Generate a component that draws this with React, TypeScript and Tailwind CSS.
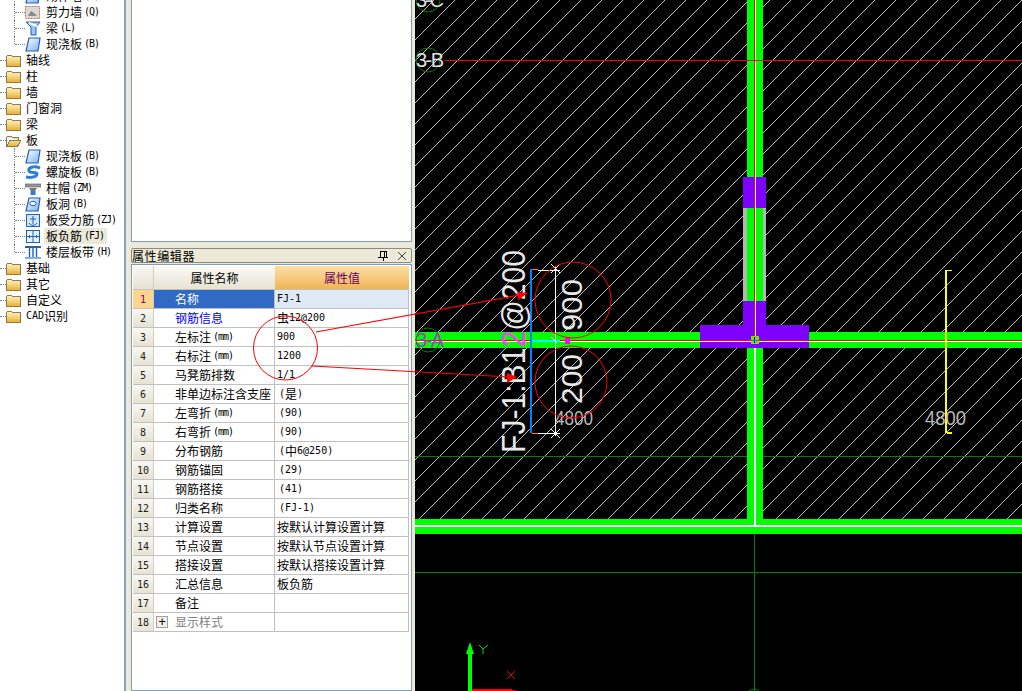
import React from "react";

const cjk = "font-['Noto_Sans_CJK_SC',sans-serif] text-[12px] leading-[16px] shrink-0";
const mono = "font-['DejaVu_Sans_Mono',monospace] text-[10px] leading-[16px] shrink-0";
const monoSmall = "font-['DejaVu_Sans_Mono',monospace] text-[10px] leading-[16px] tracking-[-1px] ml-[2px] shrink-0";

function Mixed({ text, small }: { text: string; small?: boolean }) {
  const parts = text.match(/[\u3000-\u9fff]+|[^\u3000-\u9fff]+/g) ?? [];
  return (
    <span className="whitespace-pre flex items-center shrink-0">
      {parts.map((p, i) =>
        /[\u3000-\u9fff]/.test(p) ? (
          <span key={i} className={cjk}>{p}</span>
        ) : (
          <span key={i} className={small ? monoSmall : mono}>{p}</span>
        )
      )}
    </span>
  );
}

function Folder({ open }: { open?: boolean }) {
  return (
    <svg width="16" height="13" viewBox="0 0 16 13" shapeRendering="crispEdges" className="shrink-0">
      <defs>
        <linearGradient id="fold" x1="0" y1="0" x2="0" y2="1">
          <stop offset="0" stopColor="#fff6c8" />
          <stop offset="1" stopColor="#e8b030" />
        </linearGradient>
      </defs>
      {open ? (
        <>
          <path d="M0.5 2.5h5l1 1h6v3" fill="#f3e2a8" stroke="#8a7a50" />
          <path d="M0.5 12.5V3M0.5 12.5h11l3.5-6.5H4L0.5 12.5z" fill="url(#fold)" stroke="#8a7a50" />
        </>
      ) : (
        <path d="M0.5 2.5l1-1h4l1 1h7.5v10H0.5z" fill="url(#fold)" stroke="#8a7a50" />
      )}
    </svg>
  );
}

function ChildIcon({ kind }: { kind: string }) {
  const blue = "#1c5fc0";
  return (
    <svg width="16" height="15" viewBox="0 0 16 15" className="shrink-0">
      <defs>
        <linearGradient id="plate" x1="0" y1="0" x2="1" y2="1">
          <stop offset="0" stopColor="#ffffff" />
          <stop offset="1" stopColor="#7fb0ea" />
        </linearGradient>
      </defs>
      {kind === "wall" && (
        <>
          <rect x="0.5" y="1.5" width="14" height="12" fill="#d8d8d8" stroke="#e07030" strokeDasharray="2 1" />
          <path d="M3 11l3-5 3 2 3 3z" fill="#888" />
        </>
      )}
      {kind === "beam" && (
        <>
          <path d="M1 1h14l-4 5v8H6V6z" fill="#9cc4ee" stroke={blue} />
          <path d="M4 2l8 3" stroke="#fff" strokeWidth="2" />
        </>
      )}
      {kind === "slab" && <path d="M4 1h11l-2 13H1z" fill="url(#plate)" stroke={blue} strokeWidth="1.2" />}
      {kind === "spiral" && (
        <path d="M15 3C8 0 3 3 4 6s8 0 8 3-6 4-11 3" fill="none" stroke="#2f7fd8" strokeWidth="3" />
      )}
      {kind === "cap" && (
        <>
          <rect x="0" y="3" width="16" height="3" fill="#9a9a9a" stroke="#555" strokeWidth="0.6" />
          <path d="M4 7h8l-2 3H6z" fill="#777" />
          <rect x="5.5" y="10" width="5" height="4" fill="#2f7fd8" />
        </>
      )}
      {kind === "hole" && (
        <>
          <path d="M4 1h11l-2 13H1z" fill="url(#plate)" stroke={blue} strokeWidth="1.2" />
          <ellipse cx="8" cy="6.5" rx="3.2" ry="2.2" fill="#fff" stroke={blue} />
        </>
      )}
      {kind === "rebar" && (
        <>
          <rect x="1.5" y="1.5" width="13" height="12" fill="#d6e6fa" stroke={blue} />
          <path d="M8 3v8M4 10c1 3 7 3 8 0M5 6h6" fill="none" stroke={blue} />
        </>
      )}
      {kind === "neg" && (
        <>
          <rect x="1.5" y="1.5" width="13" height="12" fill="#e8f1fc" stroke={blue} />
          <path d="M2 7.5h12M8 2v11M4.5 6v3M11.5 6v3" fill="none" stroke={blue} />
        </>
      )}
      {kind === "band" && (
        <>
          <rect x="0" y="1" width="16" height="2" fill="#335f9f" />
          <rect x="0" y="12" width="16" height="2" fill="#7fb0ea" />
          <path d="M4.5 3v9M8 3v9M11.5 3v9" stroke={blue} strokeWidth="1.4" />
        </>
      )}
    </svg>
  );
}

type T = { label: string; icon?: string; folder?: boolean; open?: boolean; sel?: boolean; last?: boolean };
const tree: T[] = [
  { label: "砌体墙(Q)", icon: "slab" },
  { label: "剪力墙(Q)", icon: "wall" },
  { label: "梁(L)", icon: "beam" },
  { label: "现浇板(B)", icon: "slab", last: true },
  { label: "轴线", folder: true },
  { label: "柱", folder: true },
  { label: "墙", folder: true },
  { label: "门窗洞", folder: true },
  { label: "梁", folder: true },
  { label: "板", folder: true, open: true },
  { label: "现浇板(B)", icon: "slab" },
  { label: "螺旋板(B)", icon: "spiral" },
  { label: "柱帽(ZM)", icon: "cap" },
  { label: "板洞(B)", icon: "hole" },
  { label: "板受力筋(ZJ)", icon: "rebar" },
  { label: "板负筋(FJ)", icon: "neg", sel: true },
  { label: "楼层板带(H)", icon: "band", last: true },
  { label: "基础", folder: true },
  { label: "其它", folder: true },
  { label: "自定义", folder: true },
  { label: "CAD识别", folder: true },
];

function Tree() {
  return (
    <div className="w-[124px] shrink-0 bg-white overflow-hidden text-black">
      <div className="-mt-[12px]">
        {tree.map((t, i) =>
          t.folder ? (
            <div key={i} className="h-[16px] flex items-center relative">
              <div className="w-[6px] shrink-0 border-t border-dotted border-[#808080]" />
              <Folder open={t.open} />
              <span className="ml-[4px] flex items-center">
                <Mixed text={t.label} />
              </span>
            </div>
          ) : (
            <div key={i} className="h-[16px] flex items-center pl-[15px] relative">
              <div className={`absolute left-[14px] top-0 border-l border-dotted border-[#808080] ${t.last ? "h-[8px]" : "h-[16px]"}`} />
              <div className="w-[10px] shrink-0 border-t border-dotted border-[#808080]" />
              <ChildIcon kind={t.icon!} />
              <span className={`ml-[3px] pl-[2px] pr-[3px] h-[16px] flex items-center shrink-0 ${t.sel ? "bg-[#ebe9d8]" : ""}`}>
                <Mixed text={t.label} small />
              </span>
            </div>
          )
        )}
      </div>
    </div>
  );
}

const rows: [string, string][] = [
  ["名称", "FJ-1"],
  ["钢筋信息", "虫12@200"],
  ["左标注(mm)", "900"],
  ["右标注(mm)", "1200"],
  ["马凳筋排数", "1/1"],
  ["非单边标注含支座", "(是)"],
  ["左弯折(mm)", "(90)"],
  ["右弯折(mm)", "(90)"],
  ["分布钢筋", "(中6@250)"],
  ["钢筋锚固", "(29)"],
  ["钢筋搭接", "(41)"],
  ["归类名称", "(FJ-1)"],
  ["计算设置", "按默认计算设置计算"],
  ["节点设置", "按默认节点设置计算"],
  ["搭接设置", "按默认搭接设置计算"],
  ["汇总信息", "板负筋"],
  ["备注", ""],
  ["显示样式", ""],
];

function PropTable() {
  return (
    <div className="ml-[1px] mt-[1px] w-[276px] text-black">
      <div className="flex h-[24px] border-b border-[#c4c2b4]">
        <div className="w-[21px] bg-gradient-to-b from-[#f8f7f1] to-[#e6e3d3] border-r border-[#d0cec0]" />
        <div className="w-[121px] flex items-center justify-center bg-gradient-to-b from-[#fbfaf5] to-[#e6e3d3]">
          <span className={cjk}>属性名称</span>
        </div>
        <div className="flex-1 flex items-center justify-center bg-gradient-to-b from-[#fce0a4] to-[#f0b453] text-[#660066]">
          <span className={cjk}>属性值</span>
        </div>
      </div>
      {rows.map(([name, val], i) => (
        <div key={i} className="flex h-[19px] border-b border-r border-[#c0c0c0]">
          <div
            className={`w-[21px] shrink-0 flex items-center justify-center font-['DejaVu_Sans_Mono',monospace] text-[10px] border-r border-[#d0cec0] ${
              i === 0 ? "bg-[#fdd58c] text-[#800080]" : "bg-gradient-to-b from-[#f8f7f1] to-[#e6e3d3] text-[#222]"
            }`}
          >
            {i + 1}
          </div>
          <div
            className={`w-[121px] shrink-0 flex items-center border-r border-[#c0c0c0] ${i === 0 ? "bg-[#316ac5] text-white" : ""} ${
              i === 1 ? "text-[#0000ff]" : ""
            } ${i === 17 ? "text-[#808080]" : ""}`}
          >
            {i === 17 ? (
              <span className="ml-[2px] mr-[7px] w-[12px] h-[12px] shrink-0 border border-[#a0a0a0] bg-[#f2f0e6] flex items-center justify-center text-black font-['DejaVu_Sans_Mono',monospace] text-[12px] leading-none">
                +
              </span>
            ) : (
              <span className="w-[21px] shrink-0" />
            )}
            <Mixed text={name} small />
          </div>
          <div className={`flex-1 flex items-center ${val.startsWith("(") ? "pl-[4px]" : "pl-[2px]"} ${i === 0 ? "bg-[#dfe8f5]" : ""}`}>
            <Mixed text={val} />
          </div>
        </div>
      ))}
    </div>
  );
}

function Middle() {
  return (
    <div className="w-[281px] shrink-0 flex flex-col">
      <div className="h-[242px] bg-white border-l border-r border-b border-[#7f9db9]" />
      <div className="mt-[6px] h-[15px] bg-[#ece9d8] border border-[#8a8a80] rounded-[2px] flex items-center text-black">
        <span className={`${cjk} tracking-[0.6px] flex-1`}>属性编辑器</span>
        <svg width="12" height="12" viewBox="0 0 12 12" className="mr-[8px]" shapeRendering="crispEdges">
          <path d="M3 1h6v6H3zM6 7v4M1 7.5h10M7 1v6" fill="none" stroke="#000" />
        </svg>
        <svg width="10" height="10" viewBox="0 0 10 10" className="mr-[4px]">
          <path d="M1 1l8 8M9 1l-8 8" stroke="#444" />
        </svg>
      </div>
      <div className="mt-[1px] flex-1 bg-white border border-[#7f9db9]">
        <PropTable />
      </div>
    </div>
  );
}

const cad = "'Liberation Sans', sans-serif";

function Canvas() {
  return (
    <svg width="607" height="691" viewBox="415 0 607 691" className="shrink-0 block bg-black">
      <defs>
        <pattern id="hatch" patternUnits="userSpaceOnUse" width="21" height="21" x="14" y="0">
          <path d="M-2 23L23 -2" stroke="#c0c0c0" strokeWidth="1" fill="none" shapeRendering="crispEdges" />
        </pattern>
      </defs>
      <rect x="415" y="0" width="607" height="519" fill="url(#hatch)" />
      <g shapeRendering="crispEdges">
        <rect x="415" y="456" width="607" height="1" fill="#008000" />
        <rect x="415" y="572" width="607" height="1" fill="#008000" />
        <rect x="754" y="525" width="1" height="166" fill="#008000" />
        <rect x="415" y="519" width="607" height="15" fill="#00ff00" />
        <rect x="415" y="525" width="607" height="2" fill="#ffffff" />
        <rect x="415" y="332" width="607" height="16" fill="#00ff00" />
        <rect x="747" y="0" width="16" height="519" fill="#00ff00" />
        <rect x="754" y="348" width="2" height="179" fill="#ffffff" />
        <rect x="743" y="208" width="4" height="93" fill="#b4b4b4" />
        <rect x="763" y="208" width="3" height="93" fill="#b4b4b4" />
        <rect x="743" y="177" width="23" height="31" fill="#8000ff" />
        <rect x="743" y="301" width="23" height="24" fill="#8000ff" />
        <rect x="700" y="325" width="109" height="23" fill="#8000ff" />
        <rect x="754" y="0" width="1" height="340" fill="#ff0000" />
        <rect x="755" y="0" width="1" height="340" fill="#ffffff" />
        <rect x="415" y="340" width="607" height="1" fill="#ff0000" />
        <rect x="415" y="341" width="607" height="1" fill="#ffffff" />
        <rect x="751" y="336" width="8" height="8" fill="#80e000" />
        <rect x="754" y="337" width="1" height="6" fill="#0000c0" />
        <rect x="751" y="340" width="8" height="1" fill="#0080ff" />
        <rect x="445" y="60" width="577" height="1" fill="#ff0000" />
        <rect x="530" y="340" width="30" height="2" fill="#00ffff" />
        <rect x="530" y="269" width="2" height="164" fill="#0080ff" />
        <rect x="532" y="269" width="6" height="1" fill="#ff8000" />
        <rect x="532" y="433" width="6" height="1" fill="#ff8000" />
        <rect x="538" y="270" width="22" height="1" fill="#ffffff" />
        <rect x="538" y="433" width="22" height="1" fill="#ffffff" />
        <rect x="555" y="266" width="1" height="170" fill="#ffffff" />
        <rect x="945" y="270" width="2" height="163" fill="#ffff00" />
        <rect x="947" y="270" width="5" height="1" fill="#ffff00" />
        <rect x="947" y="432" width="5" height="2" fill="#ffff00" />
        <rect x="468" y="654" width="4" height="37" fill="#00ff00" />
        <rect x="472" y="689" width="40" height="2" fill="#ff0000" />
      </g>
      <path d="M470 642l4 12h-8z" fill="#00ff00" />
      <path d="M507 689l12 2h-12z" fill="#ff0000" />
      <path d="M479 645l4 4 5-4M483 649v5" stroke="#00e000" fill="none" />
      <path d="M507 671l8 8M515 671l-8 8" stroke="#e00000" fill="none" />
      <path d="M551 264l9 9M560 264l-9 9M551 429l9 9M560 429l-9 9M551 337l6 6" stroke="#ffffff" fill="none" />
      <g fill="none" stroke="#008000">
        <circle cx="428" cy="0" r="12" />
        <circle cx="428" cy="60" r="12" />
        <circle cx="428" cy="340" r="12" />
        <circle cx="754" cy="696" r="7" />
      </g>
      <g fontFamily={cad} fontSize="20" fill="#e0e0e0">
        <text x="416" y="7" textLength="28" lengthAdjust="spacing">3-C</text>
        <text x="416" y="67" textLength="28" lengthAdjust="spacing">3-B</text>
        <text x="416" y="347" textLength="28" lengthAdjust="spacing" fill="#a040c0">3-A</text>
      </g>
      <g fontFamily={cad} fontSize="34" fill="#e8e8e8">
        <text transform="translate(525 453) rotate(-90)" textLength="203" lengthAdjust="spacingAndGlyphs">
          FJ-1:B1<tspan fill="#ff40ff">2</tspan>@200
        </text>
        <text transform="translate(582 331) rotate(-90)" fontSize="30" textLength="52" lengthAdjust="spacingAndGlyphs">900</text>
        <text transform="translate(582 404) rotate(-90)" fontSize="30" textLength="50" lengthAdjust="spacingAndGlyphs">200</text>
      </g>
      <rect x="565" y="337" width="5" height="7" fill="#ff00ff" shapeRendering="crispEdges" />
      <g fontFamily={cad} fontSize="20" fill="#b8b8b8">
        <text x="555" y="425" textLength="38" lengthAdjust="spacingAndGlyphs">4800</text>
        <text x="925" y="425" textLength="41" lengthAdjust="spacingAndGlyphs">4800</text>
      </g>
      <g fill="none" stroke="#ff0000">
        <circle cx="573" cy="300" r="38" />
        <circle cx="571" cy="382" r="36" />
      </g>
    </svg>
  );
}

export default function App() {
  return (
    <div className="relative flex w-[1022px] h-[691px] overflow-hidden bg-[#ece9d8]">
      <Tree />
      <div className="w-[2px] shrink-0 bg-[#8aa4c0]" />
      <div className="w-[5px] shrink-0 bg-[#ece9d8]" />
      <Middle />
      <div className="w-[3px] shrink-0 bg-[#ece9d8]" />
      <Canvas />
      <svg className="absolute inset-0 pointer-events-none" width="1022" height="691" viewBox="0 0 1022 691">
        <circle cx="285.5" cy="348" r="32" fill="none" stroke="#ff0000" />
        <path d="M316 332L520 295M312 366L510 377" fill="none" stroke="#ff0000" strokeWidth="1.2" />
        <path d="M528 293l-11-1 1 8zM517 377l-10-4 0 10z" fill="#ff0000" />
      </svg>
    </div>
  );
}
